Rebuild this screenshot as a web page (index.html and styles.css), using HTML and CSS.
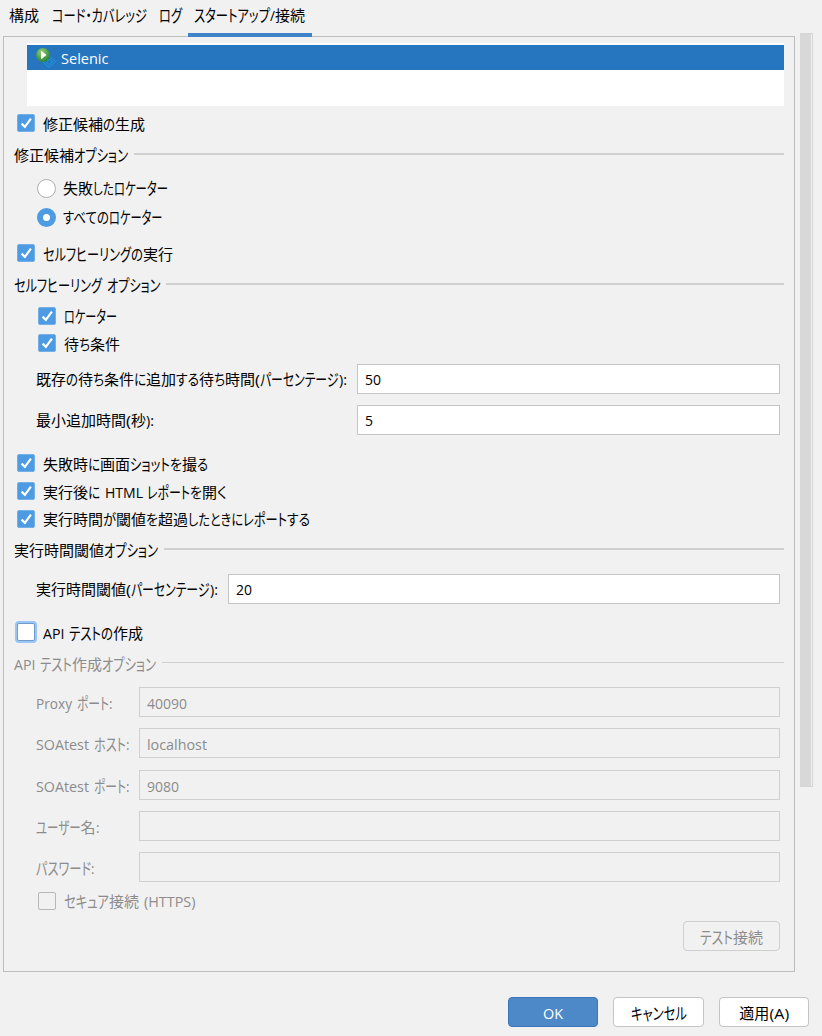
FILE: index.html
```html
<!DOCTYPE html>
<html lang="ja">
<head>
<meta charset="utf-8">
<title>Selenic</title>
<link rel="stylesheet" href="styles.css">
</head>
<body>
<svg class="defs" width="0" height="0"><symbol id="tick" viewBox="0 0 18 18"><path d="M4.6 9.6 L7.9 12.9 L13.9 4.7" fill="none" stroke="#fff" stroke-width="2.2"/></symbol></svg>
<nav class="tabs">
  <span class="tab t1">構成</span>
  <span class="tab t2"><span data-w="95">コード・カバレッジ</span></span>
  <span class="tab t3"><span data-w="23">ログ</span></span>
  <span class="tab active"><span data-w="76">スタートアップ</span><span data-w="5">/</span>接続</span>
</nav>
<div class="body">
  <main class="panel">
    <div class="list">
      <div class="item">
        <svg width="22" height="22" viewBox="0 0 22 22"><defs><radialGradient id="ball" cx=".4" cy=".3" r=".8"><stop offset="0" stop-color="#9ad07c"/><stop offset=".6" stop-color="#489d45"/><stop offset="1" stop-color="#287a35"/></radialGradient></defs><path d="M8 16 L14.5 10.5 L20.5 15.5 L14 21.5 Z M11.5 16 L14.5 13.3 L17.5 15.7 L14 18.7 Z" fill="none" stroke="#1c9ce0" stroke-width="1"/><circle cx="8" cy="9" r="6.9" fill="url(#ball)"/><path d="M6 4.8 L11.5 9 L6 13.2 Z" fill="#fff"/></svg>
        <span data-w="47.5">Selenic</span>
      </div>
    </div>

    <label class="check c1"><i class="box on"><svg><use href="#tick"/></svg></i><span class="tx">修正候補<span data-w="12">の</span>生成</span></label>
    <div class="group"><span class="tx">修正候補<span data-w="54">オプション</span></span></div>
    <label class="check in r1"><i class="radio"></i><span class="tx">失敗<span data-w="21">した</span><span data-w="54">ロケーター</span></span></label>
    <label class="check in r2"><i class="radio on"></i><span class="tx"><span data-w="46">すべての</span><span data-w="53.5">ロケーター</span></span></label>
    <label class="check c2"><i class="box on"><svg><use href="#tick"/></svg></i><span class="tx"><span data-w="88">セルフヒーリング</span><span data-w="12">の</span>実行</span></label>
    <div class="group"><span class="tx"><span data-w="88">セルフヒーリング</span><b></b><span data-w="53.5">オプション</span></span></div>
    <label class="check in c3"><i class="box on"><svg><use href="#tick"/></svg></i><span class="tx"><span data-w="53">ロケーター</span></span></label>
    <label class="check in"><i class="box on"><svg><use href="#tick"/></svg></i><span class="tx">待<span data-w="11">ち</span>条件</span></label>
    <div class="field f1"><span class="tx">既存<span data-w="12">の</span>待<span data-w="11">ち</span>条件<span data-w="12">に</span>追加<span data-w="23">する</span>待<span data-w="11">ち</span>時間<span data-w="5">(</span><span data-w="78.5">パーセンテージ</span><span data-w="8">):</span></span><div class="input"><span data-w="16">50</span></div></div>
    <div class="field f1 m11"><span class="tx">最小追加時間<span data-w="5">(</span>秒<span data-w="8">):</span></span><div class="input"><span data-w="8">5</span></div></div>

    <label class="check c4"><i class="box on"><svg><use href="#tick"/></svg></i><span class="tx">失敗時<span data-w="12">に</span>画面<span data-w="40">ショット</span><span data-w="12">を</span>撮<span data-w="11">る</span></span></label>
    <label class="check"><i class="box on"><svg><use href="#tick"/></svg></i><span class="tx">実行後<span data-w="12">に</span><b></b><span data-w="38">HTML</span><b></b><span data-w="43">レポート</span><span data-w="12">を</span>開<span data-w="10">く</span></span></label>
    <label class="check c5"><i class="box on"><svg><use href="#tick"/></svg></i><span class="tx">実行時間<span data-w="13">が</span>閾値<span data-w="12">を</span>超過<span data-w="55">したときに</span><span data-w="44">レポート</span><span data-w="23">する</span></span></label>
    <div class="group"><span class="tx">実行時間閾値<span data-w="54">オプション</span></span></div>
    <div class="field f2"><span class="tx">実行時間閾値<span data-w="5">(</span><span data-w="78.5">パーセンテージ</span><span data-w="8">):</span></span><div class="input"><span data-w="16">20</span></div></div>

    <label class="check c4"><i class="box focus"></i><span class="tx"><span data-w="21.5">API</span><b></b><span data-w="32">テスト</span><span data-w="12">の</span>作成</span></label>
    <section class="off">
      <div class="group"><span class="tx"><span data-w="21.5">API</span><b></b><span data-w="32">テスト</span>作成<span data-w="54">オプション</span></span></div>
      <div class="field f3"><span class="tx"><span data-w="36">Proxy</span><b></b><span data-w="32">ポート</span><span data-w="3.5">:</span></span><div class="input"><span data-w="40">40090</span></div></div>
      <div class="field f3 m11"><span class="tx"><span data-w="53">SOAtest</span><b></b><span data-w="32">ホスト</span><span data-w="3.5">:</span></span><div class="input"><span data-w="60">localhost</span></div></div>
      <div class="field f3 m12"><span class="tx"><span data-w="53">SOAtest</span><b></b><span data-w="32">ポート</span><span data-w="3.5">:</span></span><div class="input"><span data-w="32">9080</span></div></div>
      <div class="field f3 m11"><span class="tx"><span data-w="44.5">ユーザー</span>名<span data-w="3.5">:</span></span><div class="input"></div></div>
      <div class="field f3 m11"><span class="tx"><span data-w="55">パスワード</span><span data-w="3.5">:</span></span><div class="input"></div></div>
      <label class="check in c6"><i class="box"></i><span class="tx"><span data-w="45">セキュア</span>接続<b></b><span data-w="51.5">(HTTPS)</span></span></label>
      <div class="test"><button class="btn" disabled><span data-w="33">テスト</span>接続</button></div>
    </section>
  </main>
  <div class="scroll"></div>
</div>
<footer class="actions">
  <button class="btn primary"><span data-w="20">OK</span></button>
  <button class="btn cancel"><span data-w="56">キャンセル</span></button>
  <button class="btn"><span>適用</span><span data-w="19.5">(A)</span></button>
</footer>
<script src="fit.js"></script>
</body>
</html>
```
FILE: styles.css
```css
* { box-sizing: border-box; }
body {
  margin: 0;
  width: 822px;
  height: 1036px;
  overflow: hidden;
  background: #f1f1f1;
  color: #000;
  font: 400 15px/20px "Open Sans", "Noto Sans CJK JP", sans-serif;
  white-space: nowrap;
}
.defs { position: absolute; }
[data-w] {
  display: inline-block;
  font-feature-settings: "palt";
  transform-origin: 0 50%;
}
b { display: inline-block; width: 4.5px; }
.tabs { display: flex; height: 36px; padding-left: 9px; }
.tab { height: 37px; padding-top: 5px; }
.t1 { width: 43px; }
.t2 { width: 107px; }
.t3 { width: 29px; }
.active {
  position: relative;
  z-index: 1;
  width: 124px;
  padding-left: 6px;
  border-bottom: 4px solid #4083c9;
}
.body { display: flex; height: 936px; padding-left: 3px; }
.panel {
  width: 792px;
  padding: 6px 10px 0;
  border: 1px solid #bdbdbd;
}
.list {
  height: 63px;
  margin-left: 13px;
  padding-top: 2px;
  background: #fff;
}
.item {
  display: flex;
  align-items: center;
  height: 25px;
  padding-left: 8px;
  gap: 4px;
  background: #2675bf;
  color: #fff;
}
.item svg { margin-top: -2px; }
.check { display: flex; align-items: center; height: 28px; margin-left: 3px; }
.check .tx { padding-top: 1px; }
.in { margin-left: 24px; }
.box, .radio { display: block; flex: none; width: 18px; height: 18px; margin: 0 8px 0 0; }
.box { border: 1px solid #b8b8b8; border-radius: 2px; }
.box.on { background: #4d9be3; border-color: #74afe5; }
.box.focus { background: #fff; border-color: #719bcc; box-shadow: 0 0 0 2px #99c5f2; }
.box svg { display: block; width: 18px; height: 18px; margin: -1px; }
.radio { width: 19px; height: 19px; margin: 0 7px 0 -1px; border: 1px solid #aeaeae; border-radius: 50%; background: #fff; }
.radio.on { border: 6.5px solid #4d9be3; }
.c1 { margin-top: 3px; }
.r1 { margin-top: 1px; }
.r1 .tx, .r2 .tx, .c3 .tx, .c6 .tx { padding-top: 0; }
.r2 { height: 30px; }
.r2 .tx { margin-top: -1px; }
.c2 { margin-top: 7px; }
.c3 { height: 26px; }
.c4 { margin-top: 14px; }
.c5 { height: 27px; }
.c6 { margin-top: 5px; }
.group { display: flex; align-items: center; height: 36px; gap: 6px; }
.group .tx { margin-top: -1px; }
.group::after { content: ""; flex: 1; height: 2px; margin-top: -2px; background: #d0d0d0; }
.field { display: grid; align-items: center; height: 30px; padding: 0 4px 0 22px; }
.f1 { grid-template-columns: 321px 1fr; margin-top: 7px; }
.f2 { grid-template-columns: 192px 1fr; margin-top: 6px; }
.f3 { grid-template-columns: 103px 1fr; margin-top: 5px; }
.m11 { margin-top: 11px; }
.m12 { margin-top: 12px; }
.input {
  height: 30px;
  padding: 4px 6.5px 0;
  border: 1px solid #c5c5c5;
  background: #fff;
}
.off { color: #8c8c8c; }
.off .field .tx { padding-top: 1px; }
.off .input { padding: 5px 7px 0; background: transparent; border-color: #d0d0d0; }
.off .group::after { height: 1px; margin-top: -3px; }
.test { display: flex; justify-content: flex-end; padding: 6px 4px 0 0; }
.btn {
  display: flex;
  align-items: center;
  justify-content: center;
  width: 90px;
  height: 30px;
  padding: 1px 0 0;
  border: 1px solid #c4c4c4;
  border-radius: 4px;
  background: #fff;
  color: #000;
  font: inherit;
  white-space: nowrap;
}
.cancel { width: 91px; }
.test .btn { width: 97px; background: transparent; border-color: #cfcfcf; color: #8c8c8c; }
.primary { background: #4d89c9; border-color: #3c76b8; color: #fff; }
.scroll {
  width: 13px;
  height: 754px;
  margin: -3px 0 0 5px;
  border: solid #d5d5d5;
  border-width: 1px 1px 1px 0;
  background: linear-gradient(90deg, #d8d8d8 11px, #f1f1f1 11px);
}
.actions { display: flex; justify-content: flex-end; gap: 15px; padding: 25px 13px 0 0; }
```
FILE: fit.js
```js
document.querySelectorAll('[data-w]').forEach(function (run) {
  var width = parseFloat(run.dataset.w);
  var natural = run.getBoundingClientRect().width;
  var tall = /[\u30a0-\u30ff]/.test(run.textContent) ? 1.1 : 1;
  run.style.width = width + 'px';
  run.style.transform = 'scale(' + width / natural + ',' + tall + ')';
});
```
